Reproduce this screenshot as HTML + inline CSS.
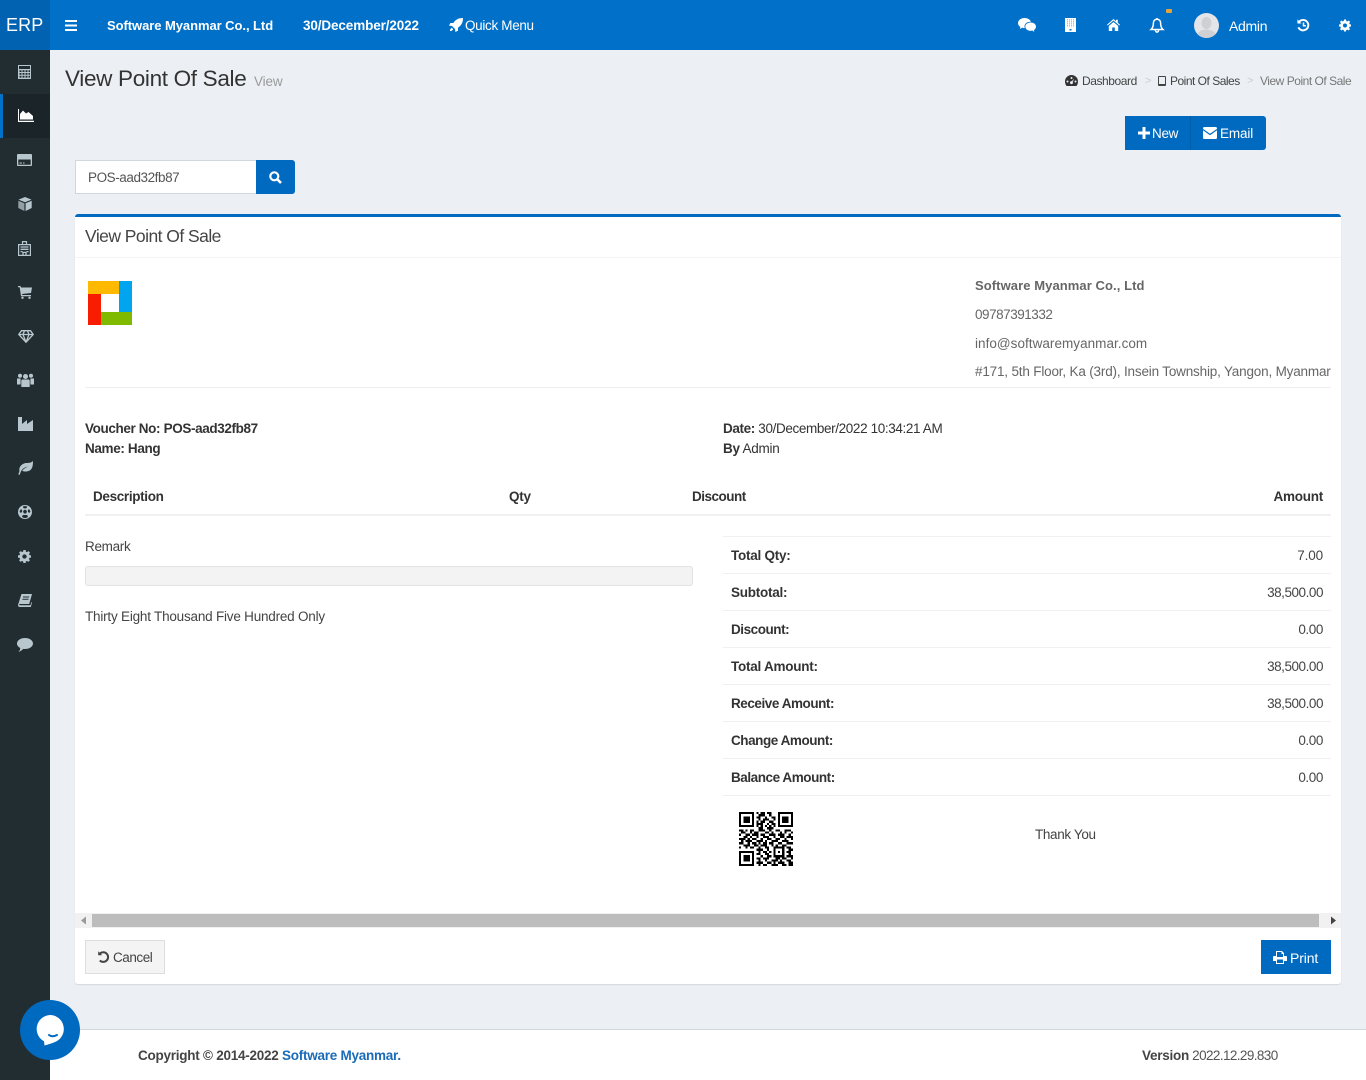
<!DOCTYPE html>
<html lang="en"><head><meta charset="utf-8"><title>View Point Of Sale</title>
<style>
*{box-sizing:border-box}
html,body{margin:0;padding:0;width:1366px;height:1080px;overflow:hidden}
body{position:relative;background:#ecf0f5;font-family:"Liberation Sans",Arial,sans-serif;font-size:13.5px;letter-spacing:-.13px;color:#333}
.a,.t,svg.i{position:absolute}
.t{line-height:20px;height:20px;white-space:nowrap;margin-top:1px}
.b{font-weight:bold;letter-spacing:-.25px}
.r{text-align:right}
.w{color:#fff}
.g{color:#666}
.l{position:absolute;background:#f0f0f0;height:1px}
svg.i{fill:currentColor;overflow:visible}
.s{color:#b8c7ce}
.s svg{position:absolute;left:17px}
</style></head><body>

<!-- Header -->
<div class="a" style="left:0;top:0;width:1366px;height:50px;background:#0070c9"></div>
<div class="a" style="left:0;top:0;width:50px;height:50px;background:#0062b1"></div>
<div class="t w" style="left:6px;top:14px;font-size:18px;letter-spacing:.1px">ERP</div>
<svg class="i w" style="left:65px;top:20px" width="12" height="11" viewBox="0 0 12 11"><path d="M0 0h12v2H0zM0 4.500h12v2H0zM0 9h12v2H0z"/></svg>
<div class="t b w" style="left:107px;top:15px;font-size:13px;letter-spacing:-.06px">Software Myanmar Co., Ltd</div>
<div class="t b w" style="left:303px;top:15px;font-size:13.5px;letter-spacing:-.12px">30/December/2022</div>
<svg class="i w" style="left:449px;top:18px" width="14" height="14" viewBox="0 0 14 14"><path d="M14 0C9.500 0 6.600 1.600 4.300 5H1.400L0 7.600l3 .4 3 3 .4 3L9 12.600V9.700C12.400 7.400 14 4.500 14 0zM2.800 9.800C1.600 10.400 1 11.700.9 13.100 2.300 13 3.600 12.400 4.200 11.200z"/></svg>
<div class="t w" style="left:465px;top:15px;letter-spacing:-.33px">Quick Menu</div>

<!-- header right icons -->
<svg class="i w" style="left:1018px;top:18px" width="18" height="15" viewBox="0 0 18 15"><path d="M6.500 0C2.900 0 0 2.300 0 5.100c0 1.600 1 3 2.400 3.900L1.800 11l2.300-1.200c.7.200 1.400.3 2.200.3h.5c-.2-.5-.3-1-.3-1.600C6.500 5.800 9 3.800 12.300 3.800h.6C12.300 1.600 9.700 0 6.500 0z"/><path d="M18 8.600c0-2.400-2.400-4.100-5.400-4.100S7.300 6.300 7.300 8.600s2.400 4.200 5.300 4.200c.6 0 1.200-.1 1.700-.3L16.300 14l-.5-1.800C17.100 11.400 18 10.100 18 8.600z"/></svg>
<svg class="i w" style="left:1065px;top:18px" width="11" height="14" viewBox="0 0 11 14"><path fill-rule="evenodd" d="M0 0h11v14H0zM2 1.500v.8h.8v-.8zm2 0v.8h.8v-.8zm2 0v.8h.8v-.8zm2 0v.8h.8v-.8zM2 3.500v.8h.8v-.8zm2 0v.8h.8v-.8zm2 0v.8h.8v-.8zm2 0v.8h.8v-.8zM2 5.500v.8h.8v-.8zm2 0v.8h.8v-.8zm2 0v.8h.8v-.8zm2 0v.8h.8v-.8zM2 7.500v.8h.8v-.8zm2 0v.8h.8v-.8zm2 0v.8h.8v-.8zm2 0v.8h.8v-.8zM4.500 11v1.500h2V11z"/></svg>
<svg class="i w" style="left:1107px;top:19px" width="13" height="12" viewBox="0 0 13 12"><path d="M6.500 0 0 5.700l.7.800L6.500 1.500l5.800 5 .7-.8-2.200-2V.8H9v1.400zM1.800 7v5h3.400V8.500h2.600V12h3.400V7L6.500 3z"/></svg>
<svg class="i" style="left:1150px;top:18px;color:#fff;fill:none;stroke:#fff;stroke-width:1.500" width="14" height="15" viewBox="0 0 14 15"><path d="M7 1.200C4.600 1.200 3.400 3 3.400 5.200c0 3.600-1 5-2.400 6.300h12c-1.400-1.300-2.400-2.700-2.400-6.300C10.600 3 9.400 1.200 7 1.200zM5.400 12c0 1.300.8 2.200 1.600 2.200s1.600-.9 1.600-2.200M7 0v1.200"/></svg>
<div class="a" style="left:1166px;top:9px;width:6px;height:4px;border-radius:1px;background:#e8a23a"></div>
<svg class="a" style="left:1194px;top:13px" width="25" height="25" viewBox="0 0 25 25"><defs><clipPath id="c"><circle cx="12.500" cy="12.500" r="12.500"/></clipPath></defs><circle cx="12.500" cy="12.500" r="12.500" fill="#e4e5e8"/><g clip-path="url(#c)" fill="#cfd0d4"><ellipse cx="12.500" cy="10" rx="5" ry="6"/><ellipse cx="12.500" cy="23" rx="9.500" ry="6.500"/></g></svg>
<div class="t w" style="left:1229px;top:15px;font-size:14px;letter-spacing:-.3px">Admin</div>
<svg class="i" style="left:1297px;top:19px;fill:none;stroke:#fff;stroke-width:1.900" width="13" height="13" viewBox="0 0 13 13"><path d="M2 3a5.200 5.200 0 1 1 -.6 5.300"/><path d="M.4.400 4.500 4.500H.4z" fill="#fff" stroke="none"/><path d="M6.500 3.500v3.300h2.400" stroke-width="1.500"/></svg>
<svg class="i w" style="left:1339px;top:19px" width="12" height="13" viewBox="0 0 12 12"><path fill-rule="evenodd" d="M5 0h2l.3 1.600 1 .4L9.700 1l1.400 1.400L10.200 3.700l.4 1 1.400.3v2l-1.500.3-.4 1 .9 1.300-1.400 1.400-1.300-.9-1 .4L7 12H5l-.3-1.500-1-.4-1.300.9L1 9.600l.9-1.300-.4-1L0 7V5l1.500-.3.4-1L1 2.400 2.400 1l1.300.9 1-.4zM6 4a2 2 0 1 0 0 4 2 2 0 0 0 0-4z"/></svg>

<!-- Sidebar -->
<div class="a s" style="left:0;top:50px;width:50px;height:1030px;background:#222d32">
  <div class="a" style="left:0;top:44px;width:50px;height:44px;background:#1b2529;border-left:3px solid #0070c9"></div>
  <svg style="top:15px;left:18px" width="13" height="14" viewBox="0 0 13 14" fill="currentColor"><path fill-rule="evenodd" d="M0 0h13v14H0zM1 1v3h11V1zM1.500 5.200v1.800h2V5.200zm3 0v1.800h2V5.200zm3 0v1.800h2V5.200zm3 0v1.800h1.500V5.200zm-9 2.800v1.800h2V8zm3 0v1.800h2V8zm3 0v1.800h2V8zm3 0v1.800h1.500V8zm-9 2.800v1.800h2v-1.800zm3 0v1.800h2v-1.800zm3 0v1.800h2v-1.800zm3 0v1.800h1.500v-1.800z"/></svg>
  <svg style="top:59px;left:18px;color:#fff" width="16" height="13" viewBox="0 0 16 13" fill="currentColor"><path d="M1 0v11.700h15V13H0V0z"/><path d="M2 10.500V5L5 1.500 8 4.500 10.500 3 15 7v3.500z"/></svg>
  <svg style="top:104px;left:17px" width="15" height="12" viewBox="0 0 15 12" fill="currentColor"><path fill-rule="evenodd" d="M1 0h13a1 1 0 0 1 1 1v10a1 1 0 0 1-1 1H1a1 1 0 0 1-1-1V1a1 1 0 0 1 1-1zM1.300 5.500v5.200h12.400V5.500zM2.500 8.500h2.500v1H2.500zm3.500 0h1.500v1H6z"/></svg>
  <svg style="top:147px;left:18px" width="14" height="14" viewBox="0 0 14 14" fill="currentColor"><path d="M7 0l6.500 2.600L7 5.300.5 2.600z"/><path d="M.300 3.700 6.400 6.300V14L.300 11z" opacity=".75"/><path d="M13.700 3.700 7.600 6.300V14l6.100-3z"/></svg>
  <svg style="top:191px;left:18px" width="13" height="15" viewBox="0 0 13 15" fill="none" stroke="currentColor" stroke-width="1.200"><path d="M.6 3.600h11.800v10.800H.6zM4.500 3.600V.6h4v3"/><path d="M2.500 6h8M2.500 8.300h8M2.500 10.600h2M8.500 10.600h2M5 14.400v-3h3v3" stroke-width="1.300"/></svg>
  <svg style="top:236px;left:18px" width="14" height="13" viewBox="0 0 14 13" fill="currentColor"><path d="M0 0h2.500l.5 1.500H14l-1 5.500-9 1 .3 1H13v1.200H3L1.700 1.200H0z"/><circle cx="4.500" cy="11.800" r="1.200"/><circle cx="11.500" cy="11.800" r="1.200"/></svg>
  <svg style="top:280px;left:18px" width="16" height="13" viewBox="0 0 16 13" fill="none" stroke="currentColor" stroke-width="1.300"><path d="M3.500.700h9L15.200 4.500 8 12.200.8 4.500zM.8 4.500h14.400M5 4.500 8 12.200l3-7.700M5 4.500 6.500.7M11 4.500 9.500.7"/></svg>
  <svg style="top:323px;left:17px" width="17" height="14" viewBox="0 0 17 14" fill="currentColor"><circle cx="8.500" cy="3.500" r="2.500"/><circle cx="3" cy="2.800" r="2"/><circle cx="14" cy="2.800" r="2"/><path d="M5 6.500h7l.7 1V14H4.300V7.500zM0 5.500h3.600v6H0zM13.400 5.500H17v6h-3.600z"/></svg>
  <svg style="top:367px;left:18px" width="15" height="14" viewBox="0 0 15 14" fill="currentColor"><path d="M0 0h4v7l5-4v4l6-4v11H0z"/></svg>
  <svg style="top:411px;left:18px" width="15" height="14" viewBox="0 0 15 14" fill="currentColor"><path d="M15 0c0 6-1 10.500-7.500 10.500-1.300 0-2.500-.3-3.300-.8C5.500 8 7.500 6.500 10 5.500 7 6 4 7.500 2.500 11.500L1.500 14l-1.200-.6L1.500 10C.5 6 4 2 9 2c2.500 0 4.500-.5 6-2z"/></svg>
  <svg style="top:455px;left:18px" width="14" height="14" viewBox="0 0 14 14" fill="currentColor"><path fill-rule="evenodd" d="M7 0a7 7 0 1 1 0 14A7 7 0 0 1 7 0zM7 4.500 5 6l.8 2.500h2.400L9 6zM5 1.500 5.200 3 7 3.500 8.800 3 9 1.500 7 1zM1.500 6.500 2.800 8 4 7 4.200 5.200 3 4zM12.500 6.500 11 4l-1.200 1.200L10 7l1.200 1zM4 12l2 1h2l2-1-.8-2H4.800z"/></svg>
  <svg style="top:500px;left:18px" width="13" height="13" viewBox="0 0 12 12" fill="currentColor"><path fill-rule="evenodd" d="M5 0h2l.3 1.600 1 .4L9.700 1l1.400 1.400L10.200 3.700l.4 1 1.400.3v2l-1.500.3-.4 1 .9 1.300-1.400 1.400-1.300-.9-1 .4L7 12H5l-.3-1.500-1-.4-1.300.9L1 9.600l.9-1.300-.4-1L0 7V5l1.500-.3.4-1L1 2.400 2.400 1l1.300.9 1-.4zM6 4a2 2 0 1 0 0 4 2 2 0 0 0 0-4z"/></svg>
  <svg style="top:544px;left:18px" width="14" height="13" viewBox="0 0 14 13" fill="currentColor"><path fill-rule="evenodd" d="M3.500 0H14l-2.800 10H1.800c-.5 0-.7.400-.6.800.1.300.4.500.8.500h10.500l.9-3.300.6.500-1.200 4.500H1.800C.6 13 0 12 0 11zM5 2.500v1h6l.3-1zm-.6 2.300v1h6l.3-1z"/></svg>
  <svg style="top:588px;left:17px" width="16" height="14" viewBox="0 0 16 14" fill="currentColor"><path d="M8 0c4.400 0 8 2.400 8 5.500S12.400 11 8 11c-.6 0-1.200 0-1.700-.1C5 12.300 3 13.500 1.500 14 2.500 13 3.200 11.500 3.300 10 1.300 9 0 7.400 0 5.500 0 2.400 3.600 0 8 0z"/></svg>
</div>

<!-- Title / breadcrumb -->
<div class="t" style="left:65px;top:63px;height:30px;line-height:30px;font-size:22.500px;letter-spacing:-.32px;color:#333">View Point Of Sale</div>
<div class="t" style="left:254px;top:71px;font-size:13.500px;color:#999">View</div>
<svg class="i" style="left:1065px;top:75px;color:#333" width="13" height="11" viewBox="0 0 13 11"><path fill-rule="evenodd" d="M6.500 0A6.500 6.500 0 0 1 13 6.500c0 1.700-.5 3.200-1.500 4.500h-10C.5 9.700 0 8.200 0 6.500A6.500 6.500 0 0 1 6.500 0zM6.500 2a1 1 0 1 0 0 2 1 1 0 0 0 0-2zM2.500 5.500a1 1 0 1 0 0 2 1 1 0 0 0 0-2zm8 0a1 1 0 1 0 0 2 1 1 0 0 0 0-2zM9.300 3.500 6.800 6.200a1.500 1.500 0 1 0 .9.600z"/></svg>
<div class="t" style="left:1082px;top:70px;font-size:12px;letter-spacing:-.43px;color:#444">Dashboard</div>
<div class="t" style="left:1145px;top:70px;font-size:11px;color:#ccc">&gt;</div>
<div class="a" style="left:1158px;top:76px;width:8px;height:10px;border:1.500px solid #444;border-bottom-width:2.500px;border-radius:1px"></div>
<div class="t" style="left:1170px;top:70px;font-size:12px;letter-spacing:-.5px;color:#444">Point Of Sales</div>
<div class="t" style="left:1247px;top:70px;font-size:11px;color:#ccc">&gt;</div>
<div class="t" style="left:1260px;top:70px;font-size:12px;letter-spacing:-.48px;color:#777">View Point Of Sale</div>

<!-- New / Email -->
<div class="a" style="left:1125px;top:116px;width:141px;height:34px;background:#0069c0;border-radius:0 3px 3px 0"></div>
<div class="a" style="left:1190px;top:116px;width:1px;height:34px;background:#005da8"></div>
<svg class="i w" style="left:1138px;top:127px" width="12" height="12" viewBox="0 0 12 12"><path d="M4.500 0h3v4.500H12v3H7.500V12h-3V7.500H0v-3h4.500z"/></svg>
<div class="t w" style="left:1152px;top:123px;font-size:13.500px;letter-spacing:-.3px">New</div>
<svg class="i w" style="left:1203px;top:127px" width="14" height="12" viewBox="0 0 14 12"><path d="M0 1.300C0 .6.600 0 1.300 0h11.400c.7 0 1.300.6 1.300 1.300v.6L7 6.800 0 1.900zM0 3.300l7 4.900 7-4.900v7.400c0 .7-.6 1.300-1.300 1.300H1.300C.6 12 0 11.400 0 10.700z"/></svg>
<div class="t w" style="left:1220px;top:123px;font-size:13.500px">Email</div>

<!-- Search -->
<div class="a" style="left:75px;top:160px;width:182px;height:34px;background:#fff;border:1px solid #d2d6de"></div>
<div class="t" style="left:88px;top:167px;color:#555;letter-spacing:-.43px">POS-aad32fb87</div>
<div class="a" style="left:256px;top:160px;width:39px;height:34px;background:#0069c0;border-radius:0 3px 3px 0"></div>
<svg class="i" style="left:269px;top:171px;fill:none;stroke:#fff;stroke-width:2.200" width="13" height="13" viewBox="0 0 13 13"><circle cx="5.300" cy="5.300" r="4"/><path d="M8.200 8.200 12 12" stroke-width="2.600"/></svg>

<!-- Card -->
<div class="a" style="left:75px;top:214px;width:1266px;height:770px;background:#fff;border-top:3px solid #0069c0;border-radius:3px;box-shadow:0 1px 1px rgba(0,0,0,.1)"></div>
<div class="t" style="left:85px;top:225px;font-size:17.500px;letter-spacing:-.54px;color:#444">View Point Of Sale</div>
<div class="l" style="left:75px;top:257px;width:1266px;background:#f4f4f4"></div>

<svg class="a" style="left:88px;top:281px" width="44" height="44" viewBox="0 0 44 44"><path fill="#ffb900" d="M0 0h31v13H0z"/><path fill="#00a4ef" d="M31 0h13v31H31z"/><path d="M0 13h13v31H0z" fill="#f81c00"/><path fill="#7fba00" d="M13 31h31v13H13z"/></svg>

<div class="t b g" style="left:975px;top:275px;font-size:13px;letter-spacing:.08px">Software Myanmar Co., Ltd</div>
<div class="t g" style="left:975px;top:304px;letter-spacing:-.47px">09787391332</div>
<div class="t g" style="left:975px;top:333px;letter-spacing:.04px">info@softwaremyanmar.com</div>
<div class="t g" style="left:975px;top:361px;font-size:13.500px;letter-spacing:-.18px">#171, 5th Floor, Ka (3rd), Insein Township, Yangon, Myanmar</div>
<div class="l" style="left:85px;top:387px;width:1246px;background:#eee"></div>

<div class="t b" style="left:85px;top:418px;font-size:13.500px;letter-spacing:-.37px">Voucher No: POS-aad32fb87</div>
<div class="t b" style="left:85px;top:438px;font-size:13.500px;letter-spacing:-.35px">Name: Hang</div>
<div class="t" style="left:723px;top:418px;letter-spacing:-.37px"><span class="b" style="letter-spacing:-.37px">Date:</span> 30/December/2022 10:34:21 AM</div>
<div class="t" style="left:723px;top:438px;letter-spacing:-.25px"><span class="b">By</span> Admin</div>

<div class="t b" style="left:93px;top:486px;letter-spacing:-.34px">Description</div>
<div class="t b" style="left:509px;top:486px">Qty</div>
<div class="t b" style="left:692px;top:486px;letter-spacing:-.5px">Discount</div>
<div class="t b r" style="right:43px;top:486px">Amount</div>
<div class="l" style="left:85px;top:514px;width:1246px;height:2px;background:#f1f1f1"></div>

<div class="t" style="left:85px;top:536px;color:#444;letter-spacing:-.3px">Remark</div>
<div class="a" style="left:85px;top:566px;width:608px;height:20px;background:#f3f3f3;border:1px solid #e2e2e2;border-radius:3px"></div>
<div class="t" style="left:85px;top:606px;color:#444;letter-spacing:-.21px">Thirty Eight Thousand Five Hundred Only</div>

<!-- totals -->
<div class="l" style="left:723px;top:536px;width:608px"></div>
<div class="t b" style="left:731px;top:545px">Total Qty:</div><div class="t r" style="right:43px;top:545px;color:#444">7.00</div>
<div class="l" style="left:723px;top:573px;width:608px"></div>
<div class="t b" style="left:731px;top:582px">Subtotal:</div><div class="t r" style="right:43px;top:582px;color:#444;letter-spacing:-.46px">38,500.00</div>
<div class="l" style="left:723px;top:610px;width:608px"></div>
<div class="t b" style="left:731px;top:619px;letter-spacing:-.45px">Discount:</div><div class="t r" style="right:43px;top:619px;color:#444;letter-spacing:-.4px">0.00</div>
<div class="l" style="left:723px;top:647px;width:608px"></div>
<div class="t b" style="left:731px;top:656px">Total Amount:</div><div class="t r" style="right:43px;top:656px;color:#444;letter-spacing:-.46px">38,500.00</div>
<div class="l" style="left:723px;top:684px;width:608px"></div>
<div class="t b" style="left:731px;top:693px;letter-spacing:-.45px">Receive Amount:</div><div class="t r" style="right:43px;top:693px;color:#444;letter-spacing:-.46px">38,500.00</div>
<div class="l" style="left:723px;top:721px;width:608px"></div>
<div class="t b" style="left:731px;top:730px;letter-spacing:-.45px">Change Amount:</div><div class="t r" style="right:43px;top:730px;color:#444;letter-spacing:-.4px">0.00</div>
<div class="l" style="left:723px;top:758px;width:608px"></div>
<div class="t b" style="left:731px;top:767px;letter-spacing:-.45px">Balance Amount:</div><div class="t r" style="right:43px;top:767px;color:#444;letter-spacing:-.4px">0.00</div>
<div class="l" style="left:723px;top:795px;width:608px"></div>

<!-- QR -->
<svg class="a" style="left:739px;top:812px" width="54" height="54" viewBox="0 0 25 25" shape-rendering="crispEdges"><path fill="none" stroke="#000" stroke-width="1" d="M0 .5h7M8 .5h1M10 .5h2M13 .5h2M18 .5h7M0 1.500h1M6 1.500h1M9 1.500h3M14 1.500h1M18 1.500h1M24 1.500h1M0 2.500h1M2 2.500h3M6 2.500h1M8 2.500h2M12 2.500h1M15 2.500h2M18 2.500h1M20 2.500h3M24 2.500h1M0 3.500h1M2 3.500h3M6 3.500h1M9 3.500h1M11 3.500h3M16 3.500h1M18 3.500h1M20 3.500h3M24 3.500h1M0 4.500h1M2 4.500h3M6 4.500h1M8 4.500h1M10 4.500h2M14 4.500h2M18 4.500h1M20 4.500h3M24 4.500h1M0 5.500h1M6 5.500h1M8 5.500h3M13 5.500h1M15 5.500h2M18 5.500h1M24 5.500h1M0 6.500h7M8 6.500h1M10 6.500h1M12 6.500h1M14 6.500h1M16 6.500h1M18 6.500h7M9 7.500h2M13 7.500h3M0 8.500h2M3 8.500h1M5 8.500h2M9 8.500h3M14 8.500h1M17 8.500h2M21 8.500h3M1 9.500h2M5 9.500h1M7 9.500h2M12 9.500h2M15 9.500h1M19 9.500h1M21 9.500h1M24 9.500h1M0 10.500h1M3 10.500h2M6 10.500h3M10 10.500h2M14 10.500h3M18 10.500h3M23 10.500h1M2 11.500h2M5 11.500h1M8 11.500h1M11 11.500h3M16 11.500h1M19 11.500h2M22 11.500h3M0 12.500h3M4 12.500h1M6 12.500h2M10 12.500h1M13 12.500h2M17 12.500h2M21 12.500h1M24 12.500h1M1 13.500h1M3 13.500h3M8 13.500h3M12 13.500h1M15 13.500h3M20 13.500h3M0 14.500h2M4 14.500h1M6 14.500h2M9 14.500h1M11 14.500h2M14 14.500h2M18 14.500h2M22 14.500h3M2 15.500h3M7 15.500h2M10 15.500h3M15 15.500h1M17 15.500h1M20 15.500h2M0 16.500h1M3 16.500h1M5 16.500h2M9 16.500h1M12 16.500h2M16 16.500h5M22 16.500h2M8 17.500h3M13 17.500h1M16 17.500h1M20 17.500h1M23 17.500h2M0 18.500h7M9 18.500h1M11 18.500h2M14 18.500h1M16 18.500h1M18 18.500h1M20 18.500h1M22 18.500h2M0 19.500h1M6 19.500h1M8 19.500h2M12 19.500h2M16 19.500h1M20 19.500h1M23 19.500h1M0 20.500h1M2 20.500h3M6 20.500h1M10 20.500h1M13 20.500h2M16 20.500h5M22 20.500h3M0 21.500h1M2 21.500h3M6 21.500h1M8 21.500h2M11 21.500h3M17 21.500h2M20 21.500h2M24 21.500h1M0 22.500h1M2 22.500h3M6 22.500h1M9 22.500h1M12 22.500h1M15 22.500h3M19 22.500h1M22 22.500h2M0 23.500h1M6 23.500h1M8 23.500h3M13 23.500h2M16 23.500h1M18 23.500h3M23 23.500h2M0 24.500h7M9 24.500h1M11 24.500h2M15 24.500h3M20 24.500h2M23 24.500h2"/></svg>
<div class="t" style="left:1035px;top:824px;color:#444;letter-spacing:-.35px">Thank You</div>

<!-- scrollbar -->
<div class="a" style="left:75px;top:913px;width:1266px;height:15px;background:#f1f1f1"></div>
<div class="a" style="left:92px;top:914px;width:1227px;height:13px;background:#bdbdbd"></div>
<svg class="a" style="left:80px;top:916px" width="8" height="9" viewBox="0 0 8 9"><path d="M6 .5v8L1 4.500z" fill="#9a9a9a"/></svg>
<svg class="a" style="left:1329px;top:916px" width="8" height="9" viewBox="0 0 8 9"><path d="M2 .5v8l5-4z" fill="#444"/></svg>

<!-- Card footer -->
<div class="a" style="left:85px;top:940px;width:80px;height:34px;background:#f4f4f4;border:1px solid #ddd"></div>
<svg class="i" style="left:98px;top:951px;fill:none;stroke:#444;stroke-width:2" width="12" height="12" viewBox="0 0 12 12"><path d="M1.800 2.800A4.800 4.800 0 1 1 1.800 9.400"/><path d="M.2.200 4.200 4.200H.2z" fill="#444" stroke="none"/></svg>
<div class="t" style="left:113px;top:947px;color:#444;letter-spacing:-.45px">Cancel</div>
<div class="a" style="left:1261px;top:940px;width:70px;height:34px;background:#0069c0"></div>
<svg class="i w" style="left:1273px;top:951px" width="14" height="13" viewBox="0 0 14 13"><path fill-rule="evenodd" d="M3 0h6l2 2v3h2a1 1 0 0 1 1 1v4h-3v3H3v-3H0V6a1 1 0 0 1 1-1h2zM4 1v5h6V3H8.500V1zM4 8.500V12h6V8.500z"/></svg>
<div class="t w" style="left:1290px;top:947px;font-size:14px">Print</div>

<!-- Footer -->
<div class="a" style="left:50px;top:1029px;width:1316px;height:51px;background:#fff;border-top:1px solid #d2d6de"></div>
<div class="t b" style="left:138px;top:1045px;font-size:13.500px;color:#444">Copyright © 2014-2022 <span style="color:#1a6bb8">Software Myanmar</span><span style="color:#1a6bb8">.</span></div>
<div class="t" style="left:1142px;top:1045px;color:#555;letter-spacing:-.6px"><span class="b" style="color:#444;letter-spacing:-.25px">Version</span> 2022.12.29.830</div>

<!-- Chat widget -->
<svg class="a" style="left:20px;top:1000px" width="60" height="60" viewBox="0 0 60 60"><circle cx="30" cy="30" r="30" fill="#0069c0"/><path fill="#fff" d="M30 15a14 14 0 0 1 5 27c-3 1.300-7 2.500-10.500 3.500l-.5-4.200A14 14 0 0 1 30 15z"/><path d="M29 35c2 1.600 5 1.600 8 0" fill="none" stroke="#0069c0" stroke-width="2" stroke-linecap="round"/></svg>

</body></html>
